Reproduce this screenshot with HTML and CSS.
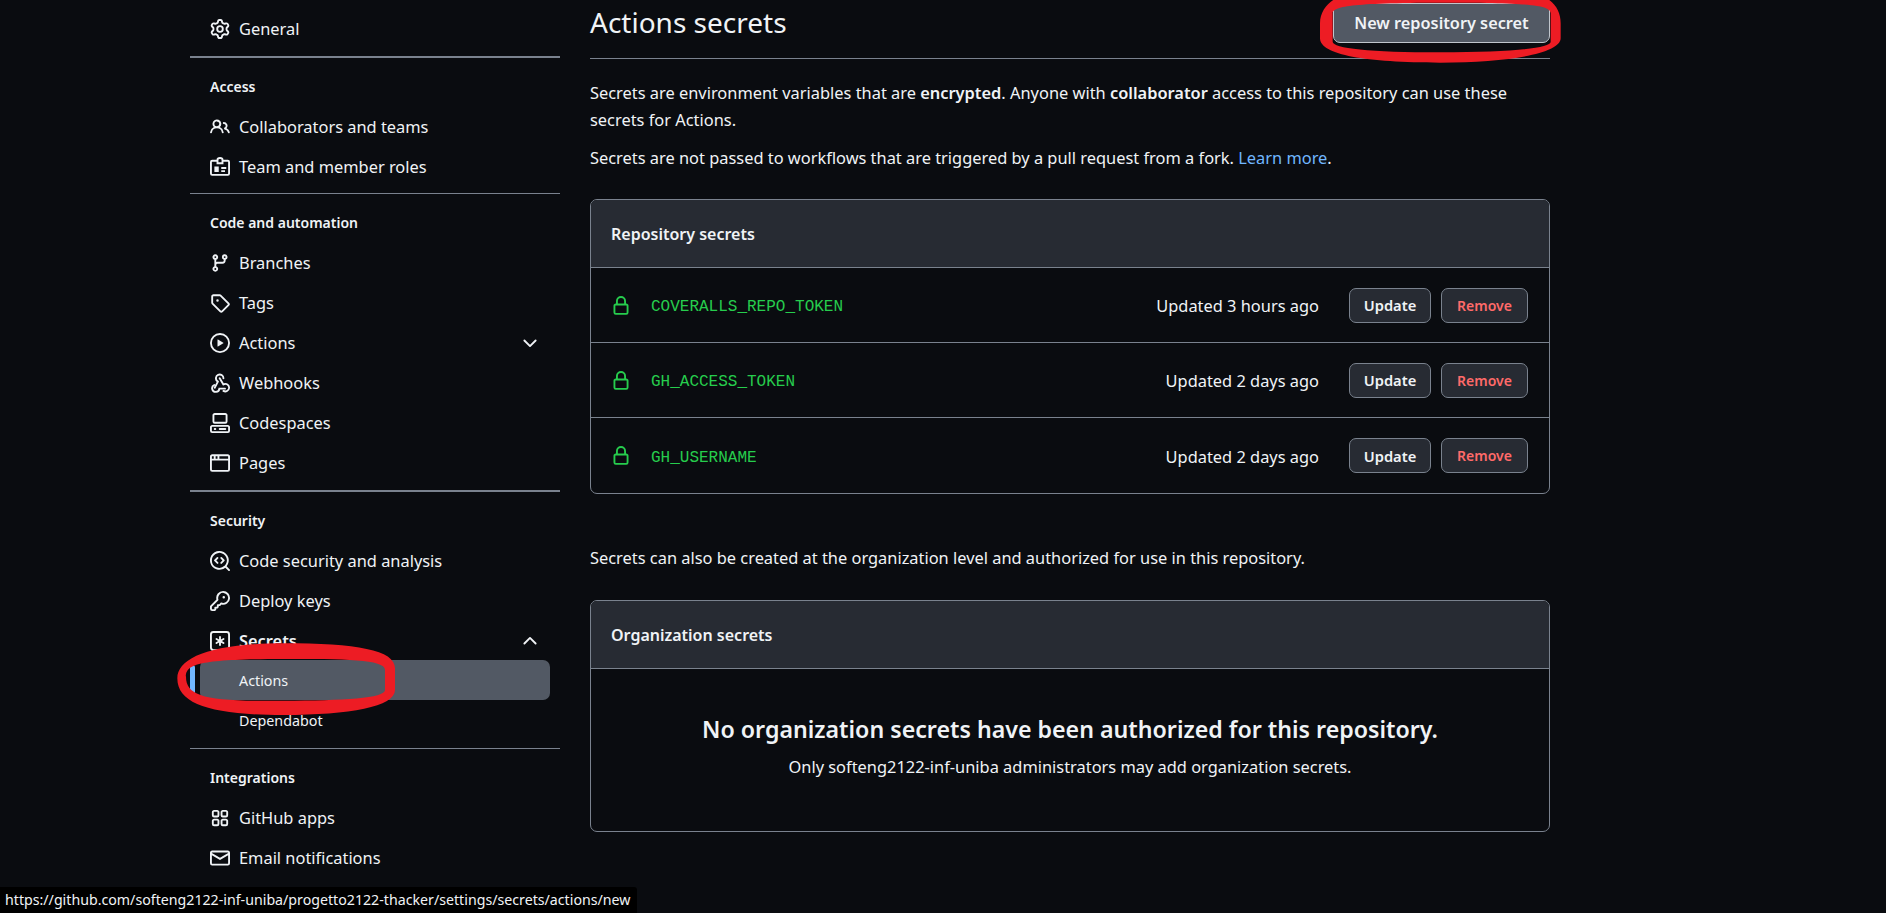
FILE: index.html
```html
<!DOCTYPE html>
<html lang="en">
<head>
<meta charset="utf-8">
<title>Actions secrets</title>
<link rel="stylesheet" href="styles.css">
</head>
<body>
<svg class="defs" width="0" height="0" aria-hidden="true">
  <symbol id="i-gear" viewBox="0 0 16 16"><path d="M8 0a8.2 8.2 0 0 1 .701.031C9.444.095 9.99.645 10.16 1.29l.288 1.107c.018.066.079.158.212.224.231.114.454.243.668.386.123.082.233.09.299.071l1.103-.303c.644-.176 1.392.021 1.82.63.27.385.506.792.704 1.218.315.675.111 1.422-.364 1.891l-.814.806c-.049.048-.098.147-.088.294.016.257.016.515 0 .772-.01.147.038.246.088.294l.814.806c.475.469.679 1.216.364 1.891a7.977 7.977 0 0 1-.704 1.217c-.428.61-1.176.807-1.82.63l-1.102-.302c-.067-.019-.177-.011-.3.071a5.909 5.909 0 0 1-.668.386c-.133.066-.194.158-.211.224l-.29 1.106c-.168.646-.715 1.196-1.458 1.26a8.006 8.006 0 0 1-1.402 0c-.743-.064-1.289-.614-1.458-1.26l-.289-1.106c-.018-.066-.079-.158-.212-.224a5.738 5.738 0 0 1-.668-.386c-.123-.082-.233-.09-.299-.071l-1.103.303c-.644.176-1.392-.021-1.82-.63a8.12 8.12 0 0 1-.704-1.218c-.315-.675-.111-1.422.363-1.891l.815-.806c.05-.048.098-.147.088-.294a6.214 6.214 0 0 1 0-.772c.01-.147-.038-.246-.088-.294l-.815-.806C.635 6.045.431 5.298.746 4.623a7.92 7.92 0 0 1 .704-1.217c.428-.61 1.176-.807 1.82-.63l1.102.302c.067.019.177.011.3-.071.214-.143.437-.272.668-.386.133-.066.194-.158.211-.224l.29-1.106C6.009.645 6.556.095 7.299.03 7.53.01 7.764 0 8 0Zm-.571 1.525c-.036.003-.108.036-.137.146l-.289 1.105c-.147.561-.549.967-.998 1.189-.173.086-.34.183-.5.29-.417.278-.97.423-1.529.27l-1.103-.303c-.109-.03-.175.016-.195.045-.22.312-.412.644-.573.99-.014.031-.021.11.059.19l.815.806c.411.406.562.957.53 1.456a4.709 4.709 0 0 0 0 .582c.032.499-.119 1.05-.53 1.456l-.815.806c-.081.08-.073.159-.059.19.162.346.353.677.573.989.02.03.085.076.195.046l1.102-.303c.56-.153 1.113-.008 1.53.27.161.107.328.204.501.29.447.222.85.629.997 1.189l.289 1.105c.029.109.101.143.137.146a6.6 6.6 0 0 0 1.142 0c.036-.003.108-.036.137-.146l.289-1.105c.147-.561.549-.967.998-1.189.173-.086.34-.183.5-.29.417-.278.97-.423 1.529-.27l1.103.303c.109.029.175-.016.195-.045.22-.313.411-.644.573-.99.014-.031.021-.11-.059-.19l-.815-.806c-.411-.406-.562-.957-.53-1.456a4.709 4.709 0 0 0 0-.582c-.032-.499.119-1.05.53-1.456l.815-.806c.081-.08.073-.159.059-.19a6.464 6.464 0 0 0-.573-.989c-.02-.03-.085-.076-.195-.046l-1.102.303c-.56.153-1.113.008-1.53-.27a4.44 4.44 0 0 0-.501-.29c-.447-.222-.85-.629-.997-1.189l-.289-1.105c-.029-.11-.101-.143-.137-.146a6.6 6.6 0 0 0-1.142 0ZM11 8a3 3 0 1 1-6 0 3 3 0 0 1 6 0ZM9.5 8a1.5 1.5 0 1 0-3.001.001A1.5 1.5 0 0 0 9.5 8Z"/></symbol>
  <symbol id="i-people" viewBox="0 0 16 16"><path d="M2 5.5a3.5 3.5 0 1 1 5.898 2.549 5.508 5.508 0 0 1 3.034 4.084.75.75 0 1 1-1.482.235 4 4 0 0 0-7.9 0 .75.75 0 0 1-1.482-.236A5.507 5.507 0 0 1 3.102 8.05 3.493 3.493 0 0 1 2 5.5ZM11 4a3.001 3.001 0 0 1 2.22 5.018 5.01 5.01 0 0 1 2.56 3.012.749.749 0 0 1-.885.954.752.752 0 0 1-.549-.514 3.507 3.507 0 0 0-2.522-2.372.75.75 0 0 1-.574-.73v-.352a.75.75 0 0 1 .416-.672A1.5 1.5 0 0 0 11 5.5.75.75 0 0 1 11 4Zm-5.5-.5a2 2 0 1 0-.001 3.999A2 2 0 0 0 5.5 3.5Z"/></symbol>
  <symbol id="i-badge" viewBox="0 0 16 16"><path d="M6 3H1.75C1.06 3 .75 3.4.75 4v9.25c0 .6.4 1 1 1h12.5c.6 0 1-.4 1-1V4c0-.6-.4-1-1-1H10M6 2.25C6 1.2 6.9.75 8 .75s2 .45 2 1.5V5H6Z" fill="none" stroke="currentColor" stroke-width="1.5"/><path d="M3.5 7.5h3.5v4.5H3.5ZM9 8h4v1.5H9ZM9 10.5h3V12H9Z"/></symbol>
  <symbol id="i-branch" viewBox="0 0 16 16"><path d="M9.5 3.25a2.25 2.25 0 1 1 3 2.122V6A2.5 2.5 0 0 1 10 8.5H6a1 1 0 0 0-1 1v1.128a2.251 2.251 0 1 1-1.5 0V5.372a2.25 2.25 0 1 1 1.5 0v1.836A2.493 2.493 0 0 1 6 7h4a1 1 0 0 0 1-1v-.628A2.25 2.25 0 0 1 9.5 3.25Zm-6 0a.75.75 0 1 0 1.5 0 .75.75 0 0 0-1.5 0Zm8.25-.75a.75.75 0 1 0 0 1.5.75.75 0 0 0 0-1.5ZM4.25 12a.75.75 0 1 0 0 1.5.75.75 0 0 0 0-1.5Z"/></symbol>
  <symbol id="i-tag" viewBox="0 0 16 16"><path d="M1 7.775V2.75C1 1.784 1.784 1 2.75 1h5.025c.464 0 .91.184 1.238.513l6.25 6.25a1.75 1.75 0 0 1 0 2.474l-5.026 5.026a1.75 1.75 0 0 1-2.474 0l-6.25-6.25A1.75 1.75 0 0 1 1 7.775Zm1.5 0c0 .066.026.13.073.177l6.25 6.25a.25.25 0 0 0 .354 0l5.025-5.025a.25.25 0 0 0 0-.354l-6.25-6.25a.25.25 0 0 0-.177-.073H2.75a.25.25 0 0 0-.25.25ZM6 5a1 1 0 1 1 0 2 1 1 0 0 1 0-2Z"/></symbol>
  <symbol id="i-play" viewBox="0 0 16 16"><path d="M8 0a8 8 0 1 1 0 16A8 8 0 0 1 8 0ZM1.5 8a6.5 6.5 0 1 0 13 0 6.5 6.5 0 0 0-13 0Zm4.879-2.773 4.264 2.559a.25.25 0 0 1 0 .428l-4.264 2.559A.25.25 0 0 1 6 10.559V5.442a.25.25 0 0 1 .379-.215Z"/></symbol>
  <symbol id="i-webhook" viewBox="0 0 16 16"><path d="M5.5 4.25a2.25 2.25 0 0 1 4.5 0 .75.75 0 0 0 1.5 0 3.75 3.75 0 1 0-6.14 2.889l-2.272 4.258a.75.75 0 0 0 1.324.706L7 7.25a.75.75 0 0 0-.309-1.015A2.25 2.25 0 0 1 5.5 4.25Z"/><path d="M7.364 3.607a.75.75 0 0 1 1.03.257l2.608 4.349a3.75 3.75 0 1 1-.628 6.785.75.75 0 0 1 .752-1.299 2.25 2.25 0 1 0-.033-3.88.75.75 0 0 1-1.03-.256L7.107 4.636a.75.75 0 0 1 .257-1.03Z"/><path d="M3.4 9.6A2.9 2.9 0 1 0 7.5 12.5H12" fill="none" stroke="currentColor" stroke-width="1.5" stroke-linecap="round"/></symbol>
  <symbol id="i-codespaces" viewBox="0 0 16 16"><path d="M0 11.25c0-.966.784-1.75 1.75-1.75h12.5c.966 0 1.75.784 1.75 1.75v3A1.75 1.75 0 0 1 14.25 16H1.75A1.75 1.75 0 0 1 0 14.25Zm2-9.5C2 .784 2.784 0 3.75 0h8.5C13.216 0 14 .784 14 1.75v5a1.75 1.75 0 0 1-1.75 1.75h-8.5A1.75 1.75 0 0 1 2 6.75Zm1.75-.25a.25.25 0 0 0-.25.25v5c0 .138.112.25.25.25h8.5a.25.25 0 0 0 .25-.25v-5a.25.25 0 0 0-.25-.25Zm-2 9.5a.25.25 0 0 0-.25.25v3c0 .138.112.25.25.25h12.5a.25.25 0 0 0 .25-.25v-3a.25.25 0 0 0-.25-.25Z"/><path d="M7 12.75a.75.75 0 0 1 .75-.75h4.5a.75.75 0 0 1 0 1.5h-4.5a.75.75 0 0 1-.75-.75Zm-4 0a.75.75 0 0 1 .75-.75h.5a.75.75 0 0 1 0 1.5h-.5a.75.75 0 0 1-.75-.75Z"/></symbol>
  <symbol id="i-browser" viewBox="0 0 16 16"><path d="M0 2.75C0 1.784.784 1 1.75 1h12.5c.966 0 1.75.784 1.75 1.75v10.5A1.75 1.75 0 0 1 14.25 15H1.75A1.75 1.75 0 0 1 0 13.25ZM14.5 6h-13v7.25c0 .138.112.25.25.25h12.5a.25.25 0 0 0 .25-.25Zm-13-1.5H3V2.5H1.75a.25.25 0 0 0-.25.25ZM4.5 4.5H6v-2H4.5ZM7.5 4.5h7V2.75a.25.25 0 0 0-.25-.25H7.5Z"/></symbol>
  <symbol id="i-scan" viewBox="0 0 16 16"><path d="M8.47 4.97a.75.75 0 0 0 0 1.06L9.94 7.5 8.47 8.97a.75.75 0 1 0 1.06 1.06l2-2a.75.75 0 0 0 0-1.06l-2-2a.75.75 0 0 0-1.06 0ZM6.53 6.03a.75.75 0 0 0-1.06-1.06l-2 2a.75.75 0 0 0 0 1.06l2 2a.75.75 0 1 0 1.06-1.06L5.06 7.5l1.47-1.47Z"/><path d="M12.246 13.307a7.501 7.501 0 1 1 1.06-1.06l2.474 2.473a.749.749 0 0 1-.326 1.275.749.749 0 0 1-.734-.215ZM1.5 7.5a6.002 6.002 0 0 0 3.608 5.504 6.002 6.002 0 0 0 6.486-1.117.748.748 0 0 1 .292-.293A6 6 0 1 0 1.5 7.5Z"/></symbol>
  <symbol id="i-key" viewBox="0 0 16 16"><path d="M10.5 0a5.499 5.499 0 1 1-1.288 10.848l-.932.932a.749.749 0 0 1-.53.22H7v.75a.749.749 0 0 1-.22.53l-.5.5a.749.749 0 0 1-.53.22H5v.75a.749.749 0 0 1-.22.53l-.5.5a.749.749 0 0 1-.53.22h-2A1.75 1.75 0 0 1 0 14.25v-2c0-.199.079-.389.22-.53l4.932-4.932A5.5 5.5 0 0 1 10.5 0Zm-4 5.5c-.001.431.069.86.205 1.269a.75.75 0 0 1-.181.768L1.5 12.56v1.69c0 .138.112.25.25.25h1.69l.06-.06v-1.19a.75.75 0 0 1 .75-.75h1.19l.06-.06v-1.19a.75.75 0 0 1 .75-.75h1.19l1.023-1.025a.75.75 0 0 1 .768-.18A4 4 0 1 0 6.5 5.5ZM11 6a1 1 0 1 1 0-2 1 1 0 0 1 0 2Z"/></symbol>
  <symbol id="i-asterisk" viewBox="0 0 16 16"><path d="M0 2.75A2.75 2.75 0 0 1 2.75 0h10.5A2.75 2.75 0 0 1 16 2.75v10.5A2.75 2.75 0 0 1 13.25 16H2.75A2.75 2.75 0 0 1 0 13.25ZM2.75 1.5c-.69 0-1.25.56-1.25 1.25v10.5c0 .69.56 1.25 1.25 1.25h10.5c.69 0 1.25-.56 1.25-1.25V2.75c0-.69-.56-1.25-1.25-1.25Z"/><path d="M8 4a.75.75 0 0 1 .75.75V6.7l1.69-.975a.75.75 0 0 1 .75 1.3L9.5 8l1.69.976a.75.75 0 0 1-.75 1.298L8.75 9.3v1.951a.75.75 0 0 1-1.5 0V9.299l-1.69.976a.75.75 0 0 1-.75-1.3L6.5 8l-1.69-.975a.75.75 0 0 1 .75-1.3l1.69.976V4.75A.75.75 0 0 1 8 4Z"/></symbol>
  <symbol id="i-apps" viewBox="0 0 16 16"><path d="M1.5 3.25c0-.966.784-1.75 1.75-1.75h2.5c.966 0 1.75.784 1.75 1.75v2.5A1.75 1.75 0 0 1 5.75 7.5h-2.5A1.75 1.75 0 0 1 1.5 5.75Zm7 0c0-.966.784-1.75 1.75-1.75h2.5c.966 0 1.75.784 1.75 1.75v2.5a1.75 1.75 0 0 1-1.75 1.75h-2.5A1.75 1.75 0 0 1 8.5 5.75Zm-7 7c0-.966.784-1.75 1.75-1.75h2.5c.966 0 1.75.784 1.75 1.75v2.5a1.75 1.75 0 0 1-1.75 1.75h-2.5a1.75 1.75 0 0 1-1.75-1.75Zm7 0c0-.966.784-1.75 1.75-1.75h2.5c.966 0 1.75.784 1.75 1.75v2.5a1.75 1.75 0 0 1-1.75 1.75h-2.5a1.75 1.75 0 0 1-1.75-1.75ZM3.25 3a.25.25 0 0 0-.25.25v2.5c0 .138.112.25.25.25h2.5A.25.25 0 0 0 6 5.750v-2.5A.25.25 0 0 0 5.750 3Zm7 0a.25.25 0 0 0-.25.25v2.5c0 .138.112.25.25.25h2.5a.25.25 0 0 0 .25-.25v-2.5a.25.25 0 0 0-.25-.25Zm-7 7a.25.25 0 0 0-.25.25v2.5c0 .138.112.25.25.25h2.5a.25.25 0 0 0 .25-.25v-2.5a.25.25 0 0 0-.25-.25Zm7 0a.25.25 0 0 0-.25.25v2.5c0 .138.112.25.25.25h2.5a.25.25 0 0 0 .25-.25v-2.5a.25.25 0 0 0-.25-.25Z"/></symbol>
  <symbol id="i-mail" viewBox="0 0 16 16"><path d="M1.75 2h12.5c.966 0 1.75.784 1.75 1.75v8.5A1.75 1.75 0 0 1 14.25 14H1.75A1.75 1.75 0 0 1 0 12.25v-8.5C0 2.784.784 2 1.75 2ZM1.5 12.251c0 .138.112.25.25.25h12.5a.25.25 0 0 0 .25-.25V5.809L8.38 9.397a.75.75 0 0 1-.76 0L1.5 5.809v6.442Zm13-8.181v-.32a.25.25 0 0 0-.25-.25H1.75a.25.25 0 0 0-.25.25v.32L8 7.88Z"/></symbol>
  <symbol id="i-lock" viewBox="0 0 16 16"><path d="M4 4a4 4 0 0 1 8 0v2h.25c.966 0 1.75.784 1.75 1.75v5.5A1.75 1.75 0 0 1 12.25 15h-8.5A1.75 1.75 0 0 1 2 13.25v-5.5C2 6.784 2.784 6 3.75 6H4Zm8.25 3.5h-8.5a.25.25 0 0 0-.25.25v5.5c0 .138.112.25.25.25h8.5a.25.25 0 0 0 .25-.25v-5.5a.25.25 0 0 0-.25-.25ZM10.5 6V4a2.5 2.5 0 1 0-5 0v2Z"/></symbol>
  <symbol id="i-down" viewBox="0 0 16 16"><path d="M3.500 6 8 10.500 12.500 6" fill="none" stroke="currentColor" stroke-width="1.5" stroke-linecap="round" stroke-linejoin="round"/></symbol>
  <symbol id="i-up" viewBox="0 0 16 16"><path d="M3.500 10 8 5.500 12.500 10" fill="none" stroke="currentColor" stroke-width="1.5" stroke-linecap="round" stroke-linejoin="round"/></symbol>
</svg>

<div class="page">
  <nav class="sidebar">
    <a class="item"><svg class="icon"><use href="#i-gear"/></svg>General</a>
    <div class="rule thick"></div>
    <div class="heading">Access</div>
    <a class="item"><svg class="icon"><use href="#i-people"/></svg>Collaborators and teams</a>
    <a class="item"><svg class="icon"><use href="#i-badge"/></svg>Team and member roles</a>
    <div class="rule"></div>
    <div class="heading">Code and automation</div>
    <a class="item"><svg class="icon"><use href="#i-branch"/></svg>Branches</a>
    <a class="item"><svg class="icon"><use href="#i-tag"/></svg>Tags</a>
    <a class="item"><svg class="icon"><use href="#i-play"/></svg>Actions<svg class="chev"><use href="#i-down"/></svg></a>
    <a class="item"><svg class="icon"><use href="#i-webhook"/></svg>Webhooks</a>
    <a class="item"><svg class="icon"><use href="#i-codespaces"/></svg>Codespaces</a>
    <a class="item"><svg class="icon"><use href="#i-browser"/></svg>Pages</a>
    <div class="rule thick"></div>
    <div class="heading">Security</div>
    <a class="item"><svg class="icon"><use href="#i-scan"/></svg>Code security and analysis</a>
    <a class="item"><svg class="icon"><use href="#i-key"/></svg>Deploy keys</a>
    <a class="item strong"><svg class="icon"><use href="#i-asterisk"/></svg>Secrets<svg class="chev"><use href="#i-up"/></svg></a>
    <a class="subitem current"><span class="marker"></span>Actions</a>
    <a class="subitem">Dependabot</a>
    <div class="rule last"></div>
    <div class="heading">Integrations</div>
    <a class="item"><svg class="icon"><use href="#i-apps"/></svg>GitHub apps</a>
    <a class="item"><svg class="icon"><use href="#i-mail"/></svg>Email notifications</a>
  </nav>

  <main class="content">
    <header class="title-row">
      <h1 class="title">Actions secrets</h1>
      <a class="btn-primary">New repository secret</a>
    </header>
    <p class="para first">Secrets are environment variables that are <strong>encrypted</strong>. Anyone with <strong>collaborator</strong> access to this repository can use these<br>secrets for Actions.</p>
    <p class="para second">Secrets are not passed to workflows that are triggered by a pull request from a fork. <a class="link">Learn more</a>.</p>

    <section class="box">
      <div class="box-head">Repository secrets</div>
      <div class="row">
        <svg class="lock"><use href="#i-lock"/></svg>
        <code class="name">COVERALLS_REPO_TOKEN</code>
        <span class="updated">Updated 3 hours ago</span>
        <a class="btn">Update</a>
        <a class="btn danger">Remove</a>
      </div>
      <div class="row">
        <svg class="lock"><use href="#i-lock"/></svg>
        <code class="name">GH_ACCESS_TOKEN</code>
        <span class="updated">Updated 2 days ago</span>
        <a class="btn">Update</a>
        <a class="btn danger">Remove</a>
      </div>
      <div class="row">
        <svg class="lock"><use href="#i-lock"/></svg>
        <code class="name">GH_USERNAME</code>
        <span class="updated">Updated 2 days ago</span>
        <a class="btn">Update</a>
        <a class="btn danger">Remove</a>
      </div>
    </section>

    <p class="para org-note">Secrets can also be created at the organization level and authorized for use in this repository.</p>

    <section class="box">
      <div class="box-head">Organization secrets</div>
      <div class="blank">
        <h3 class="blank-title">No organization secrets have been authorized for this repository.</h3>
        <p class="blank-text">Only softeng2122-inf-uniba administrators may add organization secrets.</p>
      </div>
    </section>
  </main>
</div>

<svg class="mark mark-top" viewBox="0 0 780 210" aria-hidden="true"><path fill-rule="evenodd" d="M30 70C30 30 60 0 90-10L700-10C735 5 752 35 752 70L752 115C752 160 600 188 390 188 170 188 30 165 30 115ZM68 40C68 20 120 8 390 8 660 8 722 15 722 40L722 125C722 145 600 157 390 157 180 157 68 145 68 125Z"/></svg>
<svg class="mark mark-side" viewBox="0 0 720 270" aria-hidden="true"><path fill-rule="evenodd" d="M22 130C22 70 120 25 340 25 560 25 675 45 675 100L675 165C675 215 540 240 340 240 130 240 22 210 22 130ZM48 125C48 88 85 72 340 72 520 72 645 72 645 105L645 165C645 190 520 197 340 197 110 200 48 185 48 125Z"/></svg>

<div class="status">https://github.com/softeng2122-inf-uniba/progetto2122-thacker/settings/secrets/actions/new</div>
</body>
</html>
```
FILE: styles.css
```css
* { box-sizing: border-box; }
html, body { margin: 0; height: 100%; }
body {
  background: #0a0c10;
  color: #f0f3f6;
  font-family: "Noto Sans", "Open Sans", sans-serif;
  font-size: 16.4px;
  overflow: hidden;
  position: relative;
}
.defs { position: absolute; }
.page { display: flex; padding: 0 0 0 190px; gap: 30px; }

.sidebar { width: 370px; flex: none; padding-top: 8px; display: flex; flex-direction: column; }
.item { height: 40px; display: flex; align-items: center; padding: 1px 0 0 20px; color: #f0f3f6; }
.item.strong { font-weight: 600; }
.icon { width: 20px; height: 20px; margin-right: 9px; fill: currentColor; flex: none; }
.chev { width: 20px; height: 20px; margin-left: auto; margin-right: 20px; color: #f0f3f6; flex: none; }
.rule { height: 1px; background: #7a828e; margin-top: 7px; }
.rule.thick { height: 2px; margin-top: 8px; }
.rule.last { margin-top: 8px; }
.heading { font-size: 14px; font-weight: 600; line-height: 20px; padding: 19px 0 9px 20px; }
.subitem { height: 40px; display: flex; align-items: center; padding-left: 39px; margin-left: 10px; margin-right: 10px; font-size: 14.3px; border-radius: 7px; position: relative; }
.subitem.current { background: #525964; }
.marker { position: absolute; left: -10px; top: 5px; width: 5px; height: 30px; border-radius: 3px; background: #71b7ff; }

.content { width: 960px; flex: none; }
.title-row { height: 59px; display: flex; justify-content: space-between; padding-top: 3px; border-bottom: 1px solid #7a828e; }
.title { margin: 0; font-size: 28px; font-weight: 400; line-height: 39px; }
.btn-primary { width: 217px; height: 40px; display: flex; align-items: center; justify-content: center; background: #525964; border: 1px solid #c0c5cc; border-radius: 7px; font-weight: 600; font-size: 16.3px; }

.para { margin: 0; line-height: 27px; }
.first { margin-top: 20px; }
.second { margin-top: 11px; }
.link { color: #71b7ff; }
strong { font-weight: 600; }

.box { border: 1px solid #7a828e; border-radius: 7px; overflow: hidden; }
.para.second + .box { margin-top: 28px; }
.box-head { height: 68px; padding-left: 20px; display: flex; align-items: center; background: #272b33; font-size: 16px; font-weight: 600; border-bottom: 1px solid #7a828e; }
.row { height: 75px; display: flex; align-items: center; padding: 0 21px 0 20px; border-bottom: 1px solid #7a828e; }
.row:last-child { border-bottom: 0; }
.lock { width: 20px; height: 20px; margin-top: 1px; fill: #26cd4d; color: #26cd4d; flex: none; }
.name { margin: 4px 0 0 20px; color: #26cd4d; font-family: "Liberation Mono", monospace; font-size: 16px; }
.updated { margin: 1px 30px 0 auto; }
.btn { height: 35px; display: flex; align-items: center; justify-content: center; width: 82px; background: #272b33; border: 1px solid #7a828e; border-radius: 7px; font-size: 14.7px; font-weight: 600; }
.btn.danger { width: 87px; margin-left: 10px; color: #ff6a69; font-size: 14px; }

.org-note { margin: 50px 0 29px; }
.blank { height: 162px; text-align: center; padding-top: 43px; }
.blank-title { margin: 0; font-size: 23.2px; font-weight: 600; line-height: 34px; }
.blank-text { margin: 7px 0 0; line-height: 27px; }

.mark { position: absolute; fill: #ed1c24; }
.mark-top { left: 1310px; top: 0; width: 260px; height: 70px; }
.mark-side { left: 170px; top: 635px; width: 240px; height: 90px; }

.status { position: absolute; left: 0; bottom: 0; width: 637px; height: 26px; padding-left: 5px; line-height: 26px; background: #000; color: #f0f3f6; font-size: 14.2px; border-top-right-radius: 3px; white-space: nowrap; }
```
